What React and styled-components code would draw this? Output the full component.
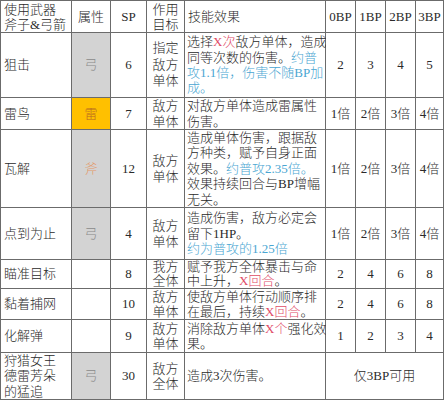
import React from 'react';
import styled, { createGlobalStyle } from 'styled-components';

const Global = createGlobalStyle`
  html, body {
    margin: 0;
    padding: 0;
    background: #fff;
  }
  body {
    font-family: "Liberation Serif", "Noto Sans CJK SC", serif;
    font-size: 13px;
    font-weight: 300;
    color: #2a2a2a;
  }
`;

const Sheet = styled.div`
  display: grid;
  grid-template-columns: 71px 39px 36px 38px 141px 30px 30px 30px 28px;
  grid-template-rows: 32px 65px 32px 78px 52px 29px 31px 33px 47px;
  border-left: 1px solid #6b6b6b;
  border-top: 1px solid #6b6b6b;
  width: 444px;
  box-sizing: border-box;
`;

const Cell = styled.div`
  display: flex;
  flex-direction: column;
  justify-content: center;
  align-items: ${p => (p.$align === 'left' ? 'flex-start' : 'center')};
  padding: ${p => (p.$align === 'left' ? `0 0 0 ${p.$pad || 2}px` : '0')};
  border-right: 1px solid #6b6b6b;
  border-bottom: 1px solid #6b6b6b;
  background: ${p => p.$bg || '#fff'};
  color: ${p => p.$color || '#2a2a2a'};
  grid-column: ${p => (p.$span ? `span ${p.$span}` : 'auto')};
  line-height: ${p => p.$lh || 15.4}px;
  overflow: visible;
  min-width: 0;
`;

const Line = styled.div`
  white-space: nowrap;
`;

const R = styled.span`
  color: #df4d68;
`;

const B = styled.span`
  color: #4aa6d2;
`;

const GRAY = '#d3d3d3';
const YELLOW = '#ffc000';

const attrs = {
  bow: { text: '弓', bg: GRAY, color: '#8a8a8a' },
  thunder: { text: '雷', bg: YELLOW, color: '#b86a20' },
  axe: { text: '斧', bg: GRAY, color: '#e39a6a' },
};

const rows = [
  {
    name: ['狙击'],
    attr: attrs.bow,
    sp: 6,
    target: ['指定', '敌方', '单体'],
    tlh: 16.5,
    desc: [
      <>选择<R>X次</R>敌方单体，造成</>,
      <>同等次数的伤害。<B>约普</B></>,
      <B>攻1.1倍，伤害不随BP加</B>,
      <B>成。</B>,
    ],
    bp: ['2', '3', '4', '5'],
  },
  {
    name: ['雷鸟'],
    attr: attrs.thunder,
    sp: 7,
    target: ['敌方', '单体'],
    desc: [<>对敌方单体造成雷属性</>, <>伤害。</>],
    bp: ['1倍', '2倍', '3倍', '4倍'],
  },
  {
    name: ['瓦解'],
    attr: attrs.axe,
    sp: 12,
    target: ['敌方', '单体'],
    desc: [
      <>造成单体伤害，跟据敌</>,
      <>方种类，赋予自身正面</>,
      <>效果。<B>约普攻2.35倍。</B></>,
      <>效果持续回合与BP增幅</>,
      <>无关。</>,
    ],
    bp: ['1倍', '2倍', '3倍', '4倍'],
  },
  {
    name: ['点到为止'],
    attr: attrs.bow,
    sp: 4,
    target: ['敌方', '单体'],
    desc: [
      <>造成伤害，敌方必定会</>,
      <>留下1HP。</>,
      <B>约为普攻的1.25倍</B>,
    ],
    bp: ['1倍', '2倍', '3倍', '4倍'],
  },
  {
    name: ['瞄准目标'],
    attr: null,
    sp: 8,
    target: ['我方', '全体'],
    lh: 14.5,
    desc: [<>赋予我方全体暴击与命</>, <>中上升，<R>X回合</R>。</>],
    bp: ['2', '4', '6', '8'],
  },
  {
    name: ['黏着捕网'],
    attr: null,
    sp: 10,
    target: ['敌方', '单体'],
    desc: [<>使敌方单体行动顺序排</>, <>在最后，持续<R>X回合</R>。</>],
    bp: ['2', '4', '6', '8'],
  },
  {
    name: ['化解弹'],
    attr: null,
    sp: 9,
    target: ['敌方', '单体'],
    desc: [<>消除敌方单体<R>X个</R>强化效</>, <>果。</>],
    bp: ['1', '2', '3', '4'],
  },
  {
    name: ['狩猎女王', '德雷芳朵', '的猛追'],
    attr: attrs.bow,
    sp: 30,
    target: ['敌方', '全体'],
    desc: [<>造成3次伤害。</>],
    only: '仅3BP可用',
  },
];

const Lines = ({ items }) =>
  items.map((item, i) => <Line key={i}>{item}</Line>);

export default function App() {
  return (
    <>
      <Global />
      <Sheet>
        <Cell $align="left" $pad={3} $lh={15}>
          <Lines items={['使用武器', '斧子&弓箭']} />
        </Cell>
        <Cell>属性</Cell>
        <Cell>SP</Cell>
        <Cell $lh={15}>
          <Lines items={['作用', '目标']} />
        </Cell>
        <Cell $align="left" $pad={3}>技能效果</Cell>
        <Cell>0BP</Cell>
        <Cell>1BP</Cell>
        <Cell>2BP</Cell>
        <Cell>3BP</Cell>

        {rows.map((row, r) => (
          <React.Fragment key={r}>
            <Cell $align="left" $pad={3} $lh={row.lh}>
              <Lines items={row.name} />
            </Cell>
            <Cell $bg={row.attr ? row.attr.bg : undefined} $color={row.attr ? row.attr.color : undefined}>
              {row.attr ? row.attr.text : ''}
            </Cell>
            <Cell>{row.sp}</Cell>
            <Cell $lh={row.tlh || row.lh}>
              <Lines items={row.target} />
            </Cell>
            <Cell $align="left" $lh={row.lh}>
              <Lines items={row.desc} />
            </Cell>
            {row.only ? (
              <Cell $span={4}>{row.only}</Cell>
            ) : (
              row.bp.map((v, i) => <Cell key={i}>{v}</Cell>)
            )}
          </React.Fragment>
        ))}
      </Sheet>
    </>
  );
}
